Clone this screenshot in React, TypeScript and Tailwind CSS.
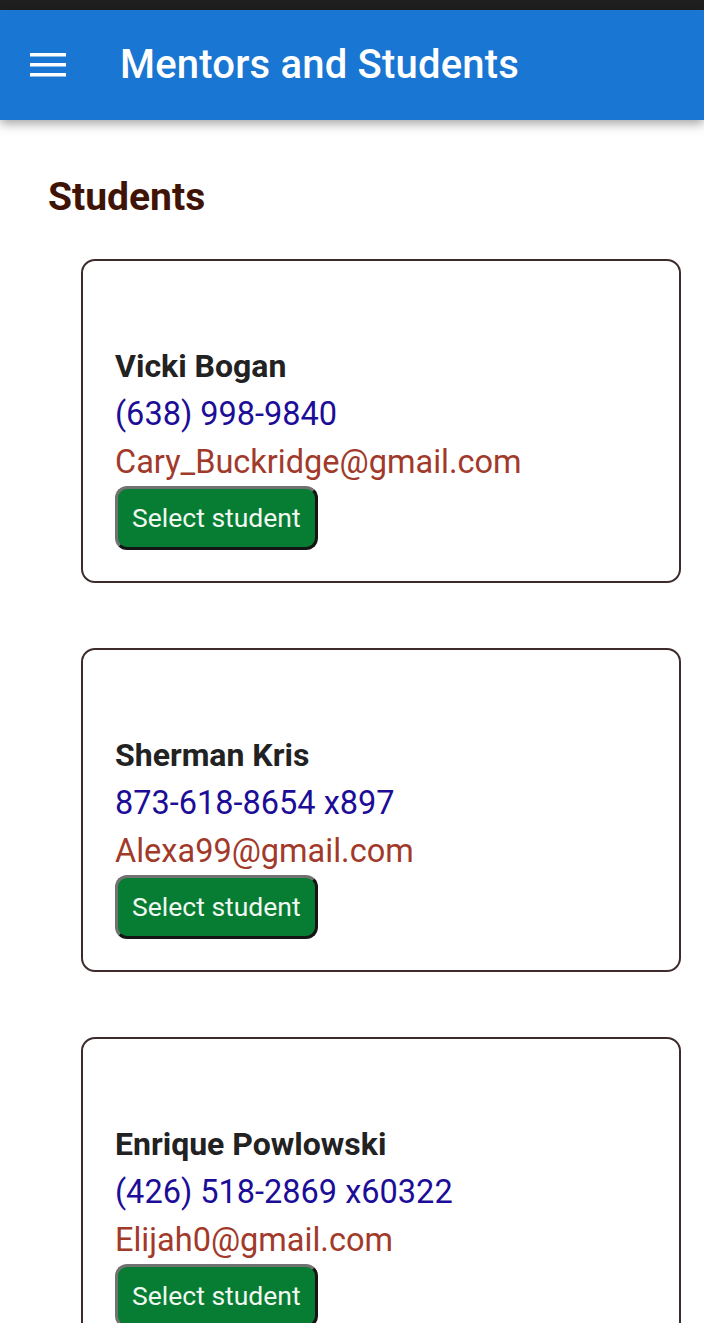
const students = [
  { name: 'Vicki Bogan', phone: '(638) 998-9840', email: 'Cary_Buckridge@gmail.com' },
  { name: 'Sherman Kris', phone: '873-618-8654 x897', email: 'Alexa99@gmail.com' },
  { name: 'Enrique Powlowski', phone: '(426) 518-2869 x60322', email: 'Elijah0@gmail.com' },
];

function MenuIcon() {
  return (
    <svg width="36" height="24" viewBox="0 0 36 24" className="block">
      <rect x="0" y="0" width="36" height="3.5" fill="#ffffff" />
      <rect x="0" y="10" width="36" height="3.5" fill="#ffffff" />
      <rect x="0" y="20" width="36" height="3.5" fill="#ffffff" />
    </svg>
  );
}

export default function App() {
  return (
    <div className="w-[704px] h-[1323px] overflow-hidden bg-white font-['Roboto',sans-serif]">
      {/* status bar */}
      <div className="h-[10px] bg-[#1f1f1f]" />

      {/* app bar */}
      <header className="relative z-10 h-[110px] bg-[#1976d2] flex items-center shadow-[0_4px_10px_rgba(0,0,0,0.35)]">
        <div className="pl-[30px] pr-[54px]">
          <MenuIcon />
        </div>
        <h1 className="text-white text-[40px] font-medium leading-none tracking-[0.2px]">Mentors and Students</h1>
      </header>

      <main className="pl-[48px] pr-[23px] pt-[55px]">
        <h2 className="text-[#3f1406] text-[39px] font-bold leading-[45px]">Students</h2>

        <div className="mt-[39px] ml-[33px] flex flex-col gap-[65px]">
          {students.map((s) => (
            <div key={s.name} className="border-2 border-[#3e2c2c] rounded-[14px] px-[32px] pt-[33px] pb-[31px]">
              <div className="h-[48px]" />
              <div className="text-[#222222] text-[32px] font-bold leading-[48px]">{s.name}</div>
              <div className="text-[#1c0d98] text-[32.5px] leading-[48px]">{s.phone}</div>
              <div className="text-[#a13a2a] text-[32.5px] leading-[48px]">{s.email}</div>
              <button className="h-[64px] px-[14px] rounded-[12px] bg-[#067d32] text-[#f1f8f1] text-[26.5px] leading-none border-[3px] border-t-[#727272] border-l-[#727272] border-b-[#151515] border-r-[#151515]">
                Select student
              </button>
            </div>
          ))}
        </div>
      </main>
    </div>
  );
}
